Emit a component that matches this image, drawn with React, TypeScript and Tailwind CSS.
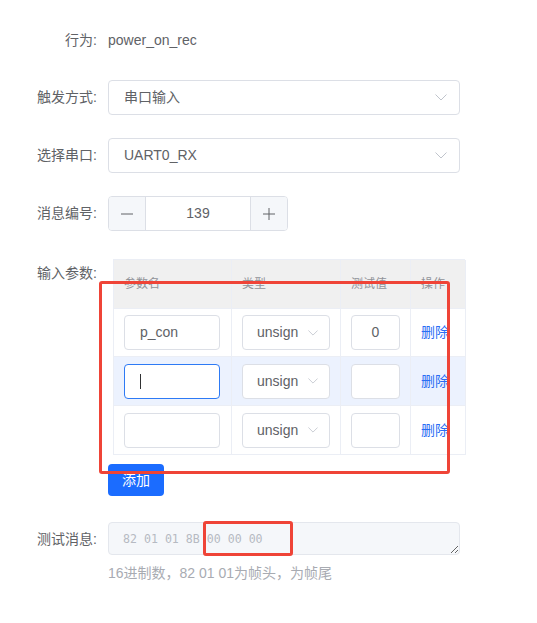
import React from "react";

const Chevron = ({ className = "" }: { className?: string }) => (
  <svg width="12" height="7" viewBox="0 0 12 7" className={className} fill="none">
    <polyline points="0.5,0.5 6,6 11.5,0.5" stroke="#c0c4cc" strokeWidth="1" />
  </svg>
);

const Label = ({ children, className = "" }: { children: React.ReactNode; className?: string }) => (
  <div className={`w-[97px] shrink-0 text-right text-[14px] text-[#606266] ${className}`}>{children}</div>
);

const SelectBox = ({ value }: { value: string }) => (
  <div className="ml-[11px] flex h-[35px] w-[352px] items-center justify-between rounded-[4px] border border-[#dcdfe6] bg-white pl-[15px] pr-[12px] text-[14px] text-[#606266]">
    <span>{value}</span>
    <Chevron />
  </div>
);

const rows = [
  { name: "p_con", val: "0", focus: false, hl: false, h: "h-[48px]" },
  { name: "", val: "", focus: true, hl: true, h: "h-[49px]" },
  { name: "", val: "", focus: false, hl: false, h: "h-[49px]" },
];

export default function App() {
  return (
    <div
      className="relative h-[623px] w-[537px] overflow-hidden bg-white"
      style={{ fontFamily: '"Liberation Sans", "Noto Sans CJK SC", sans-serif' }}
    >
      <div className="flex flex-col pt-[23px]">
        {/* 行为 */}
        <div className="flex h-[35px] items-center">
          <Label>行为:</Label>
          <div className="ml-[11px] text-[14px] text-[#606266]">power_on_rec</div>
        </div>

        {/* 触发方式 */}
        <div className="mt-[22px] flex items-center">
          <Label>触发方式:</Label>
          <SelectBox value="串口输入" />
        </div>

        {/* 选择串口 */}
        <div className="mt-[23px] flex items-center">
          <Label>选择串口:</Label>
          <SelectBox value="UART0_RX" />
        </div>

        {/* 消息编号 */}
        <div className="mt-[23px] flex items-center">
          <Label>消息编号:</Label>
          <div className="ml-[11px] flex h-[35px] w-[180px] overflow-hidden rounded-[4px] border border-[#dcdfe6] text-[14px] text-[#606266]">
            <div className="flex w-[37px] items-center justify-center border-r border-[#dcdfe6] bg-[#f5f7fa]">
              <svg width="12" height="12" viewBox="0 0 12 12">
                <line x1="0" y1="6" x2="12" y2="6" stroke="#606266" strokeWidth="1" />
              </svg>
            </div>
            <div className="flex flex-1 items-center justify-center bg-white">139</div>
            <div className="flex w-[37px] items-center justify-center border-l border-[#dcdfe6] bg-[#f5f7fa]">
              <svg width="12" height="12" viewBox="0 0 12 12">
                <line x1="0" y1="6" x2="12" y2="6" stroke="#606266" strokeWidth="1" />
                <line x1="6" y1="0" x2="6" y2="12" stroke="#606266" strokeWidth="1" />
              </svg>
            </div>
          </div>
        </div>

        {/* 输入参数 */}
        <div className="mt-[28px] flex items-start">
          <Label className="pt-[3px] leading-[22px]">输入参数:</Label>
          <div className="ml-[11px] flex flex-col">
            <div className="ml-[5px] w-[352px] border-l border-t border-[#ebeef5]">
              <div className="grid h-[49px] grid-cols-[118px_109px_70px_55px] bg-[#f0f0f0] text-[12px] text-[#909399]">
                <div className="flex items-center border-b border-r border-[#ebeef5] pl-[10px]">参数名</div>
                <div className="flex items-center border-b border-r border-[#ebeef5] pl-[10px]">类型</div>
                <div className="flex items-center border-b border-r border-[#ebeef5] pl-[10px]">测试值</div>
                <div className="flex items-center border-b border-r border-[#ebeef5] pl-[10px]">操作</div>
              </div>
              {rows.map((r, i) => (
                <div
                  key={i}
                  className={`grid ${r.h} grid-cols-[118px_109px_70px_55px] text-[14px] text-[#606266] ${
                    r.hl ? "bg-[#ecf2fe]" : "bg-white"
                  }`}
                >
                  <div className="flex items-center border-b border-r border-[#ebeef5] pl-[10px]">
                    <div
                      className={`flex h-[35px] w-[96px] items-center rounded-[4px] border bg-white pl-[15px] ${
                        r.focus ? "border-[#2d7af5]" : "border-[#dcdfe6]"
                      }`}
                    >
                      {r.name}
                      {r.focus && <span className="h-[15px] w-[1px] bg-[#303133]" />}
                    </div>
                  </div>
                  <div className="flex items-center border-b border-r border-[#ebeef5] pl-[10px]">
                    <div className="flex h-[35px] w-[88px] items-center justify-between rounded-[4px] border border-[#dcdfe6] bg-white pl-[14px] pr-[11px]">
                      <span>unsign</span>
                      <Chevron className="h-[6px] w-[10px]" />
                    </div>
                  </div>
                  <div className="flex items-center border-b border-r border-[#ebeef5] pl-[10px]">
                    <div className="flex h-[35px] w-[49px] items-center justify-center rounded-[4px] border border-[#dcdfe6] bg-white">
                      {r.val}
                    </div>
                  </div>
                  <div className="flex items-center border-b border-r border-[#ebeef5] pl-[10px] text-[#2a6df4]">删除</div>
                </div>
              ))}
            </div>
            <button className="mt-[9px] flex h-[32px] w-[56px] items-center justify-center rounded-[4px] bg-[#1b6cff] text-[14px] text-white">
              添加
            </button>
          </div>
        </div>

        {/* 测试消息 */}
        <div className="mt-[26px] flex items-start">
          <Label className="pt-[7px] leading-[20px]">测试消息:</Label>
          <div className="ml-[11px] flex flex-col">
            <textarea
              readOnly
              value="82 01 01 8B 00 00 00"
              rows={1}
              className="block h-[33px] w-[352px] resize-y rounded-[4px] border border-[#e4e7ed] bg-[#f5f7fa] px-[14px] pt-[7px] text-[11.6px] leading-[18px] text-[#b6bac2] outline-none"
              style={{ fontFamily: '"DejaVu Sans Mono", monospace' }}
            />
            <div className="mt-[8px] text-[14px] leading-[20px] text-[#a8abb2]">16进制数，82 01 01为帧头，为帧尾</div>
          </div>
        </div>
      </div>

      {/* annotation boxes */}
      <div className="absolute left-[99px] top-[281px] h-[193px] w-[351px] rounded-[3px] border-[3px] border-[#ef4437]" />
      <div className="absolute left-[203px] top-[521px] h-[35px] w-[90px] rounded-[3px] border-[3px] border-[#ef4437]" />
    </div>
  );
}
